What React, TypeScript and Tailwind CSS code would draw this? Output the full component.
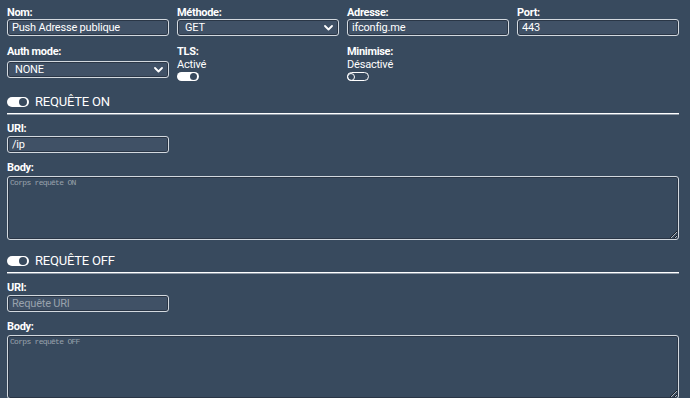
import { FC, ReactNode } from 'react';

const font = { fontFamily: 'Roboto, "Liberation Sans", sans-serif' };

const Label: FC<{ children: ReactNode }> = ({ children }) => (
  <div className="text-[11px] leading-[13px] font-bold text-white tracking-[-0.3px]">{children}</div>
);

const inputCls =
  'block h-[17px] w-full rounded-[3px] border border-[#d3d9df] bg-[#405166] shadow-[inset_0_0_0_1px_#2a3646] px-[4px] text-[11px] leading-[15px] text-white tracking-[-0.2px] outline-none';

const Chevron: FC = () => (
  <svg width="9" height="6" viewBox="0 0 9 6" className="shrink-0">
    <path d="M1 1l3.5 3.5L8 1" fill="none" stroke="white" strokeWidth="1.8" strokeLinecap="round" strokeLinejoin="round" />
  </svg>
);

const Select: FC<{ value: string }> = ({ value }) => (
  <div className={`${inputCls} flex items-center justify-between pl-[7px] pr-[5px]`}>
    <span>{value}</span>
    <Chevron />
  </div>
);

const Toggle: FC<{ on: boolean; big?: boolean }> = ({ on, big }) => {
  const size = big ? 'w-[22px] h-[10px]' : 'w-[22px] h-[9px]';
  if (on)
    return (
      <div className={`${size} rounded-full bg-white flex items-center justify-end pr-[2px]`}>
        <div className={`${big ? 'w-[8px] h-[8px]' : 'w-[7px] h-[7px]'} rounded-full bg-[#384a5e]`} />
      </div>
    );
  return (
    <div className={`${size} rounded-full border border-white flex items-center`}>
      <div className="w-[8px] h-[8px] -ml-px rounded-full border border-white" />
    </div>
  );
};

const Section: FC<{ title: string; uri: string; uriPh: string; bodyPh: string }> = ({ title, uri, uriPh, bodyPh }) => (
  <div className="flex flex-col">
    <div className="flex items-center gap-[6px] h-[12px]">
      <Toggle on big />
      <span className="text-[13px] leading-[12px] text-white tracking-[-0.2px]">{title}</span>
    </div>
    <div className="mt-[5px] h-px bg-white" />
    <div className="h-px bg-[#8e99a6]" />
    <div className="mt-[7px]">
      <Label>URI:</Label>
    </div>
    <div className="mt-[1px] w-[162px]">
      <input className={`${inputCls} placeholder:text-[#98a2ad]`} defaultValue={uri} placeholder={uriPh} />
    </div>
    <div className="mt-[8px]">
      <Label>Body:</Label>
    </div>
    <textarea
      className="block mt-[2px] h-[64px] w-full resize-y rounded-[3px] border border-[#d3d9df] bg-[#384a5e] shadow-[inset_0_0_0_1px_#2a3646] px-[2px] py-[1px] text-[8px] leading-[10px] tracking-[-0.7px] text-white outline-none placeholder:text-[#9aa3ad]"
      style={{ fontFamily: '"Liberation Mono", "DejaVu Sans Mono", monospace' }}
      placeholder={bodyPh}
    />
  </div>
);

export default function App() {
  return (
    <div className="w-[690px] h-[398px] overflow-hidden bg-[#384a5e] px-[7px] pt-[6px]" style={font}>
      <div className="grid grid-cols-4 gap-x-[8px] w-[672px]">
        <div>
          <Label>Nom:</Label>
          <input className={inputCls} defaultValue="Push Adresse publique" />
        </div>
        <div>
          <Label>Méthode:</Label>
          <Select value="GET" />
        </div>
        <div>
          <Label>Adresse:</Label>
          <input className={inputCls} defaultValue="ifconfig.me" />
        </div>
        <div>
          <Label>Port:</Label>
          <input className={inputCls} defaultValue="443" />
        </div>

        <div className="mt-[9px]">
          <Label>Auth mode:</Label>
          <div className="mt-[3px]">
            <Select value="NONE" />
          </div>
        </div>
        <div className="mt-[9px]">
          <Label>TLS:</Label>
          <div className="text-[11px] leading-[13px] text-white tracking-[-0.2px]">Activé</div>
          <div className="mt-[1px]">
            <Toggle on />
          </div>
        </div>
        <div className="mt-[9px]">
          <Label>Minimise:</Label>
          <div className="text-[11px] leading-[13px] text-white tracking-[-0.2px]">Désactivé</div>
          <div className="mt-[1px]">
            <Toggle on={false} />
          </div>
        </div>
        <div />
      </div>

      <div className="mt-[15px] w-[672px]">
        <Section title="REQUÊTE ON" uri="/ip" uriPh="Requête URI" bodyPh="Corps requête ON" />
      </div>
      <div className="mt-[15px] w-[672px]">
        <Section title="REQUÊTE OFF" uri="" uriPh="Requête URI" bodyPh="Corps requête OFF" />
      </div>
    </div>
  );
}
